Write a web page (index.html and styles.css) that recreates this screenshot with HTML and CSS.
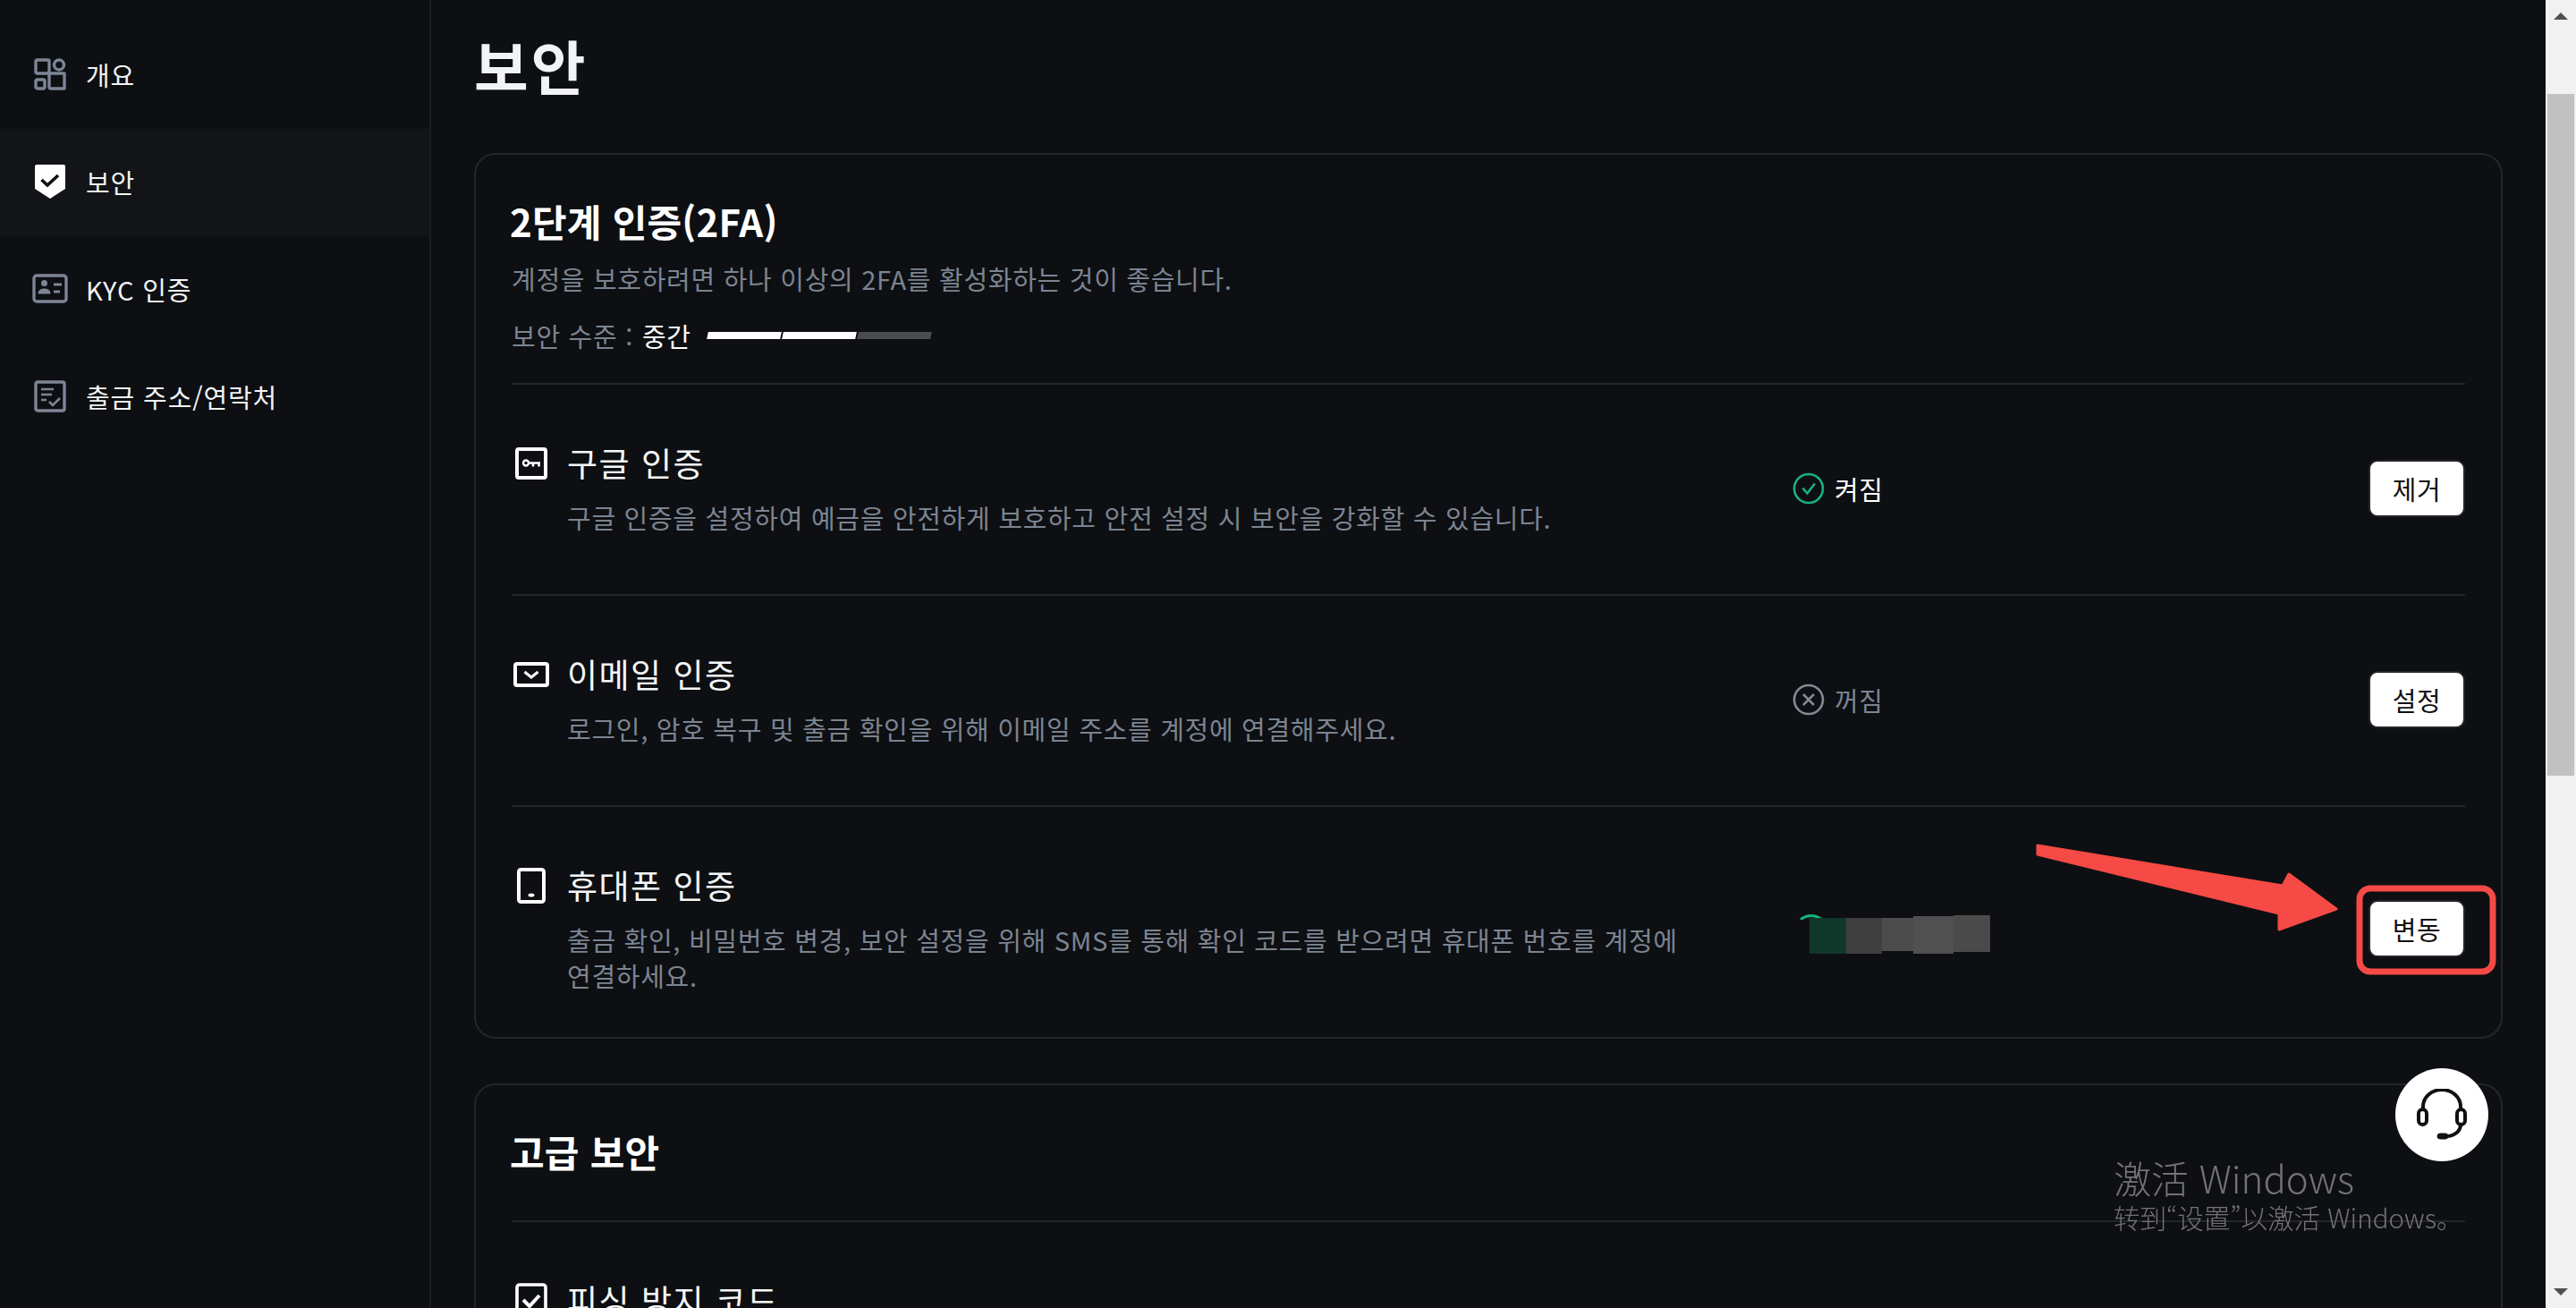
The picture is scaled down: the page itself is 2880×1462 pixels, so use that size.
FILE: index.html
```html
<!DOCTYPE html>
<html lang="ko">
<head>
<meta charset="utf-8">
<title>보안</title>
<link rel="stylesheet" href="styles.css">
</head>
<body>
<div class="app">
  <nav class="sidebar">
    <a class="nav-item">
      <span class="nav-icon"><svg width="36" height="36" viewBox="0 0 36 36" fill="none" stroke="#7d8595" stroke-width="3.4" stroke-linejoin="round"><rect x="2" y="2" width="15" height="15" rx="1.5"/><circle cx="28" cy="7.5" r="5.5"/><rect x="2" y="24" width="10" height="10" rx="2"/><path d="M17 17h17v17H19a2 2 0 0 1-2-2z"/></svg></span>
      <span>개요</span>
    </a>
    <a class="nav-item active">
      <span class="nav-icon"><svg width="36" height="40" viewBox="0 0 36 40"><path fill="#fff" d="M3 1h30a2 2 0 0 1 2 2v25l-17 11L1 28V3a2 2 0 0 1 2-2z"/><path fill="none" stroke="#101215" stroke-width="3.6" d="M8.500 18l6.500 6 12-11"/></svg></span>
      <span>보안</span>
    </a>
    <a class="nav-item">
      <span class="nav-icon"><svg width="40" height="34" viewBox="0 0 40 34" fill="none"><rect x="2" y="2" width="36" height="29" rx="3" stroke="#7d8595" stroke-width="3.400"/><circle cx="13.500" cy="10.500" r="3.500" fill="#7d8595"/><path fill="#7d8595" d="M6.500 22.500c0-4 3-6 7-6s7 2 7 6z"/><path stroke="#7d8595" stroke-width="2.800" d="M24 12h9M24 20h7"/></svg></span>
      <span>KYC 인증</span>
    </a>
    <a class="nav-item">
      <span class="nav-icon"><svg width="36" height="36" viewBox="0 0 36 36" fill="none" stroke="#7d8595" stroke-width="3"><rect x="2" y="2" width="32" height="32" rx="2" stroke-width="3.400"/><path stroke-width="2.600" d="M8 10h14M8 16h12M8 22h6M17 24l4 4 8-8"/></svg></span>
      <span>출금 주소/연락처</span>
    </a>
  </nav>

  <main class="main">
    <h1 class="page-title">보안</h1>

    <section class="card">
      <h2 class="card-title">2단계 인증(2FA)</h2>
      <p class="card-sub">계정을 보호하려면 하나 이상의 2FA를 활성화하는 것이 좋습니다.</p>
      <div class="level">
        <span>보안 수준 :</span>
        <strong class="level-value">중간</strong>
        <span class="bars"><i class="bar on"></i><i class="bar on"></i><i class="bar"></i></span>
      </div>

      <div class="row">
        <div class="row-main">
          <div class="row-head">
            <span class="row-icon"><svg width="36" height="36" viewBox="0 0 36 36" fill="none"><rect x="2" y="2" width="32" height="32" rx="2" stroke="#fff" stroke-width="4"/><circle cx="12" cy="17.500" r="3" stroke="#fff" stroke-width="2.400"/><path stroke="#fff" stroke-width="2.600" d="M15 17.500h13M20 17.500v4M26.500 17.500v4"/></svg></span>
            <span class="row-title">구글 인증</span>
          </div>
          <p class="row-desc">구글 인증을 설정하여 예금을 안전하게 보호하고 안전 설정 시 보안을 강화할 수 있습니다.</p>
        </div>
        <div class="status on">
          <svg width="36" height="36" viewBox="0 0 36 36" fill="none" stroke="#16b47c" stroke-width="2.600"><circle cx="18" cy="18" r="16"/><path d="M11.500 17.500l5 6 8.500-11"/></svg>
          <span>켜짐</span>
        </div>
        <button class="btn">제거</button>
      </div>

      <div class="row">
        <div class="row-main">
          <div class="row-head">
            <span class="row-icon"><svg width="40" height="28" viewBox="0 0 40 28" fill="none"><rect x="2" y="2" width="36" height="24" rx="2" stroke="#fff" stroke-width="4"/><path stroke="#fff" stroke-width="3" d="M12.500 11l7.500 6 7.500-6"/></svg></span>
            <span class="row-title">이메일 인증</span>
          </div>
          <p class="row-desc">로그인, 암호 복구 및 출금 확인을 위해 이메일 주소를 계정에 연결해주세요.</p>
        </div>
        <div class="status off">
          <svg width="36" height="36" viewBox="0 0 36 36" fill="none" stroke="#838a96" stroke-width="2.600"><circle cx="18" cy="18" r="16"/><path d="M12 12l12 12M24 12L12 24"/></svg>
          <span>꺼짐</span>
        </div>
        <button class="btn">설정</button>
      </div>

      <div class="row last">
        <div class="row-main">
          <div class="row-head">
            <span class="row-icon"><svg width="32" height="40" viewBox="0 0 32 40" fill="none"><rect x="2" y="2" width="28" height="36" rx="2.500" stroke="#fff" stroke-width="4"/><ellipse cx="16" cy="30.500" rx="3.500" ry="2" fill="#fff"/></svg></span>
            <span class="row-title">휴대폰 인증</span>
          </div>
          <p class="row-desc">출금 확인, 비밀번호 변경, 보안 설정을 위해 SMS를 통해 확인 코드를 받으려면 휴대폰 번호를 계정에 연결하세요.</p>
        </div>
        <div class="status masked">
          <svg class="mask-arc" width="26" height="6" viewBox="0 0 26 6" fill="none"><path stroke="#16b47c" stroke-width="3" d="M1 6C5 2.500 9 1.500 13 1.500S21 2.500 25 6"/></svg>
          <span class="tile t1"></span><span class="tile t2"></span><span class="tile t3"></span><span class="tile t4"></span><span class="tile t5"></span>
        </div>
        <button class="btn">변동</button>
      </div>
    </section>

    <section class="card second">
      <h2 class="card-title advanced">고급 보안</h2>
      <div class="row">
        <div class="row-main">
          <div class="row-head">
            <span class="row-icon"><svg width="36" height="40" viewBox="0 0 36 40" fill="none"><rect x="2" y="2" width="32" height="36" rx="3" stroke="#fff" stroke-width="3.600"/><path stroke="#fff" stroke-width="4" d="M9 19l7 7 11-12"/></svg></span>
            <span class="row-title">피싱 방지 코드</span>
          </div>
        </div>
      </div>
    </section>
  </main>

  <aside class="scrollbar">
    <span class="arrow up"></span>
    <span class="thumb"></span>
    <span class="arrow down"></span>
  </aside>
</div>

<svg class="annotation" width="2880" height="1462" viewBox="0 0 2880 1462" fill="none">
  <path fill="#f54a45" stroke="#f54a45" stroke-width="3" stroke-linejoin="round" d="M2278 945L2552 990L2559 977L2612 1016L2548 1039L2548 1021L2278 955Z"/>
  <rect x="2638" y="993" width="149" height="93" rx="12" stroke="#f54a45" stroke-width="7"/>
</svg>

<button class="support" aria-label="고객 지원"><svg width="58" height="58" viewBox="0 0 58 58" fill="none" stroke="#111" stroke-width="4"><path d="M8 24v-4a21 19 0 0 1 42 0v4"/><rect x="3" y="23" width="9" height="17" rx="4.500"/><rect x="46" y="23" width="9" height="17" rx="4.500"/><path d="M50 40c0 8-8 13-16 13"/><rect x="24" y="50" width="12" height="6" rx="3" fill="#111" stroke-width="1"/></svg></button>

<div class="watermark">
  <div class="wm-title">激活 Windows</div>
  <div class="wm-sub">转到“设置”以激活 Windows。</div>
</div>
</body>
</html>
```

FILE: styles.css
```css
* { box-sizing: border-box; }
html, body { margin: 0; height: 100%; overflow: hidden; }
body {
  background: #0d0f12;
  color: #fff;
  font-family: "Noto Sans CJK KR", "Noto Sans", sans-serif;
  word-break: keep-all;
}
.app { display: flex; height: 1462px; }
.sidebar {
  flex: 0 0 480px;
  padding-top: 24px;
  border-right: 2px solid #1b1d22;
}
.nav-item {
  display: flex;
  align-items: center;
  gap: 18px;
  height: 120px;
  padding: 0 0 3px 36px;
  width: 480px;
  font-size: 29px;
  letter-spacing: 0.03em;
  color: #f2f3f5;
}
.nav-item.active { background: #121417; }
.nav-icon { flex: 0 0 44px; display: flex; justify-content: center; margin-left: -2px; }
.main {
  flex: 1;
  min-width: 0;
  padding: 0 48px;
  overflow: hidden;
}
.page-title {
  margin: 28px 0 0;
  height: 143px;
  font-size: 66px;
  line-height: 88px;
  font-weight: 700;
  letter-spacing: 3px;
  color: #f2f3f5;
}
.card {
  border: 2px solid #24262b;
  border-radius: 24px;
  padding: 46px 40px 40px;
  height: 990px;
}
.card.second { margin-top: 50px; height: 600px; }
.card-title { margin: 0 0 0 -2px; font-size: 42px; line-height: 56px; font-weight: 700; letter-spacing: 0.005em; }
.card-sub { margin: 16px 0 0; font-size: 29px; line-height: 40px; color: #7c8491; letter-spacing: 0.7px; }
.level { display: flex; align-items: center; margin-top: 24px; height: 40px; font-size: 29px; color: #7c8491; letter-spacing: 0.7px; }
.level-value { margin-left: 10px; color: #fff; font-weight: 400; }
.bars { display: flex; gap: 2px; margin-left: 18px; }
.bar { display: block; width: 82px; height: 8px; background: #4a4c52; transform: skewX(-12deg); }
.bar.on { background: #fff; }
.row {
  display: grid;
  grid-template-columns: 1310px 1fr auto;
  column-gap: 122px;
  align-items: center;
  border-top: 2px solid #24262b;
  padding: 64px 0 66px;
}
.level + .row { margin-top: 33px; }
.row.last { padding: 64px 0 0; }
.row-head { display: flex; align-items: center; gap: 18px; height: 50px; }
.row-icon { flex: 0 0 44px; display: flex; justify-content: center; padding-bottom: 2px; }
.row-title { padding-bottom: 4px; font-size: 37px; line-height: 50px; font-weight: 400; letter-spacing: 0.04em; color: #f5f6f7; }
.row-desc { margin: 14px 0 0 62px; font-size: 29px; line-height: 40px; color: #7c8491; letter-spacing: 0.7px; }
.status { display: flex; align-items: center; gap: 11px; font-size: 29px; letter-spacing: 0.02em; }
.status.off { color: #7c8491; }
.status.masked { position: relative; gap: 0; align-items: stretch; height: 40px; padding-left: 19px; margin-top: 16px; }
.mask-arc { position: absolute; left: 8px; top: -4px; }
.tile { position: relative; display: block; }
.t1 { width: 41px; background: #10382a; }
.t2 { width: 40px; background: #3f3f3f; }
.t3 { width: 35px; background: #4c4c4c; margin-bottom: 3px; }
.t4 { width: 45px; background: #505050; margin-top: -2px; }
.t5 { width: 41px; background: #4a4a4a; margin: -3px 0 2px; }
.btn {
  width: 108px;
  height: 64px;
  border: 2px solid #24262b;
  border-radius: 10px;
  background: #fff;
  color: #111;
  font: inherit;
  font-size: 29px;
  letter-spacing: 0.02em;
  padding: 0;
}
.card-title.advanced { padding-bottom: 49px; }
.scrollbar {
  flex: 0 0 34px;
  position: relative;
  background: #f1f1f1;
}
.thumb { position: absolute; left: 2px; right: 2px; top: 105px; height: 762px; background: #c1c1c1; }
.arrow { position: absolute; left: 9px; width: 0; height: 0; border-left: 8px solid transparent; border-right: 8px solid transparent; }
.arrow.up { top: 14px; border-bottom: 8px solid #505050; }
.arrow.down { bottom: 14px; border-top: 8px solid #505050; }
.annotation { position: fixed; left: 0; top: 0; pointer-events: none; }
.support {
  position: fixed;
  left: 2678px;
  top: 1194px;
  width: 104px;
  height: 104px;
  border: 0;
  border-radius: 50%;
  background: #fff;
  display: flex;
  align-items: center;
  justify-content: center;
  padding: 0;
}
.watermark {
  position: fixed;
  left: 2363px;
  top: 1290px;
  color: #737373;
  font-family: "Noto Sans CJK SC", "Open Sans", sans-serif;
  font-weight: 300;
}
.wm-title { font-size: 42px; line-height: 52px; }
.wm-sub { font-size: 29.5px; line-height: 36px; }
```
